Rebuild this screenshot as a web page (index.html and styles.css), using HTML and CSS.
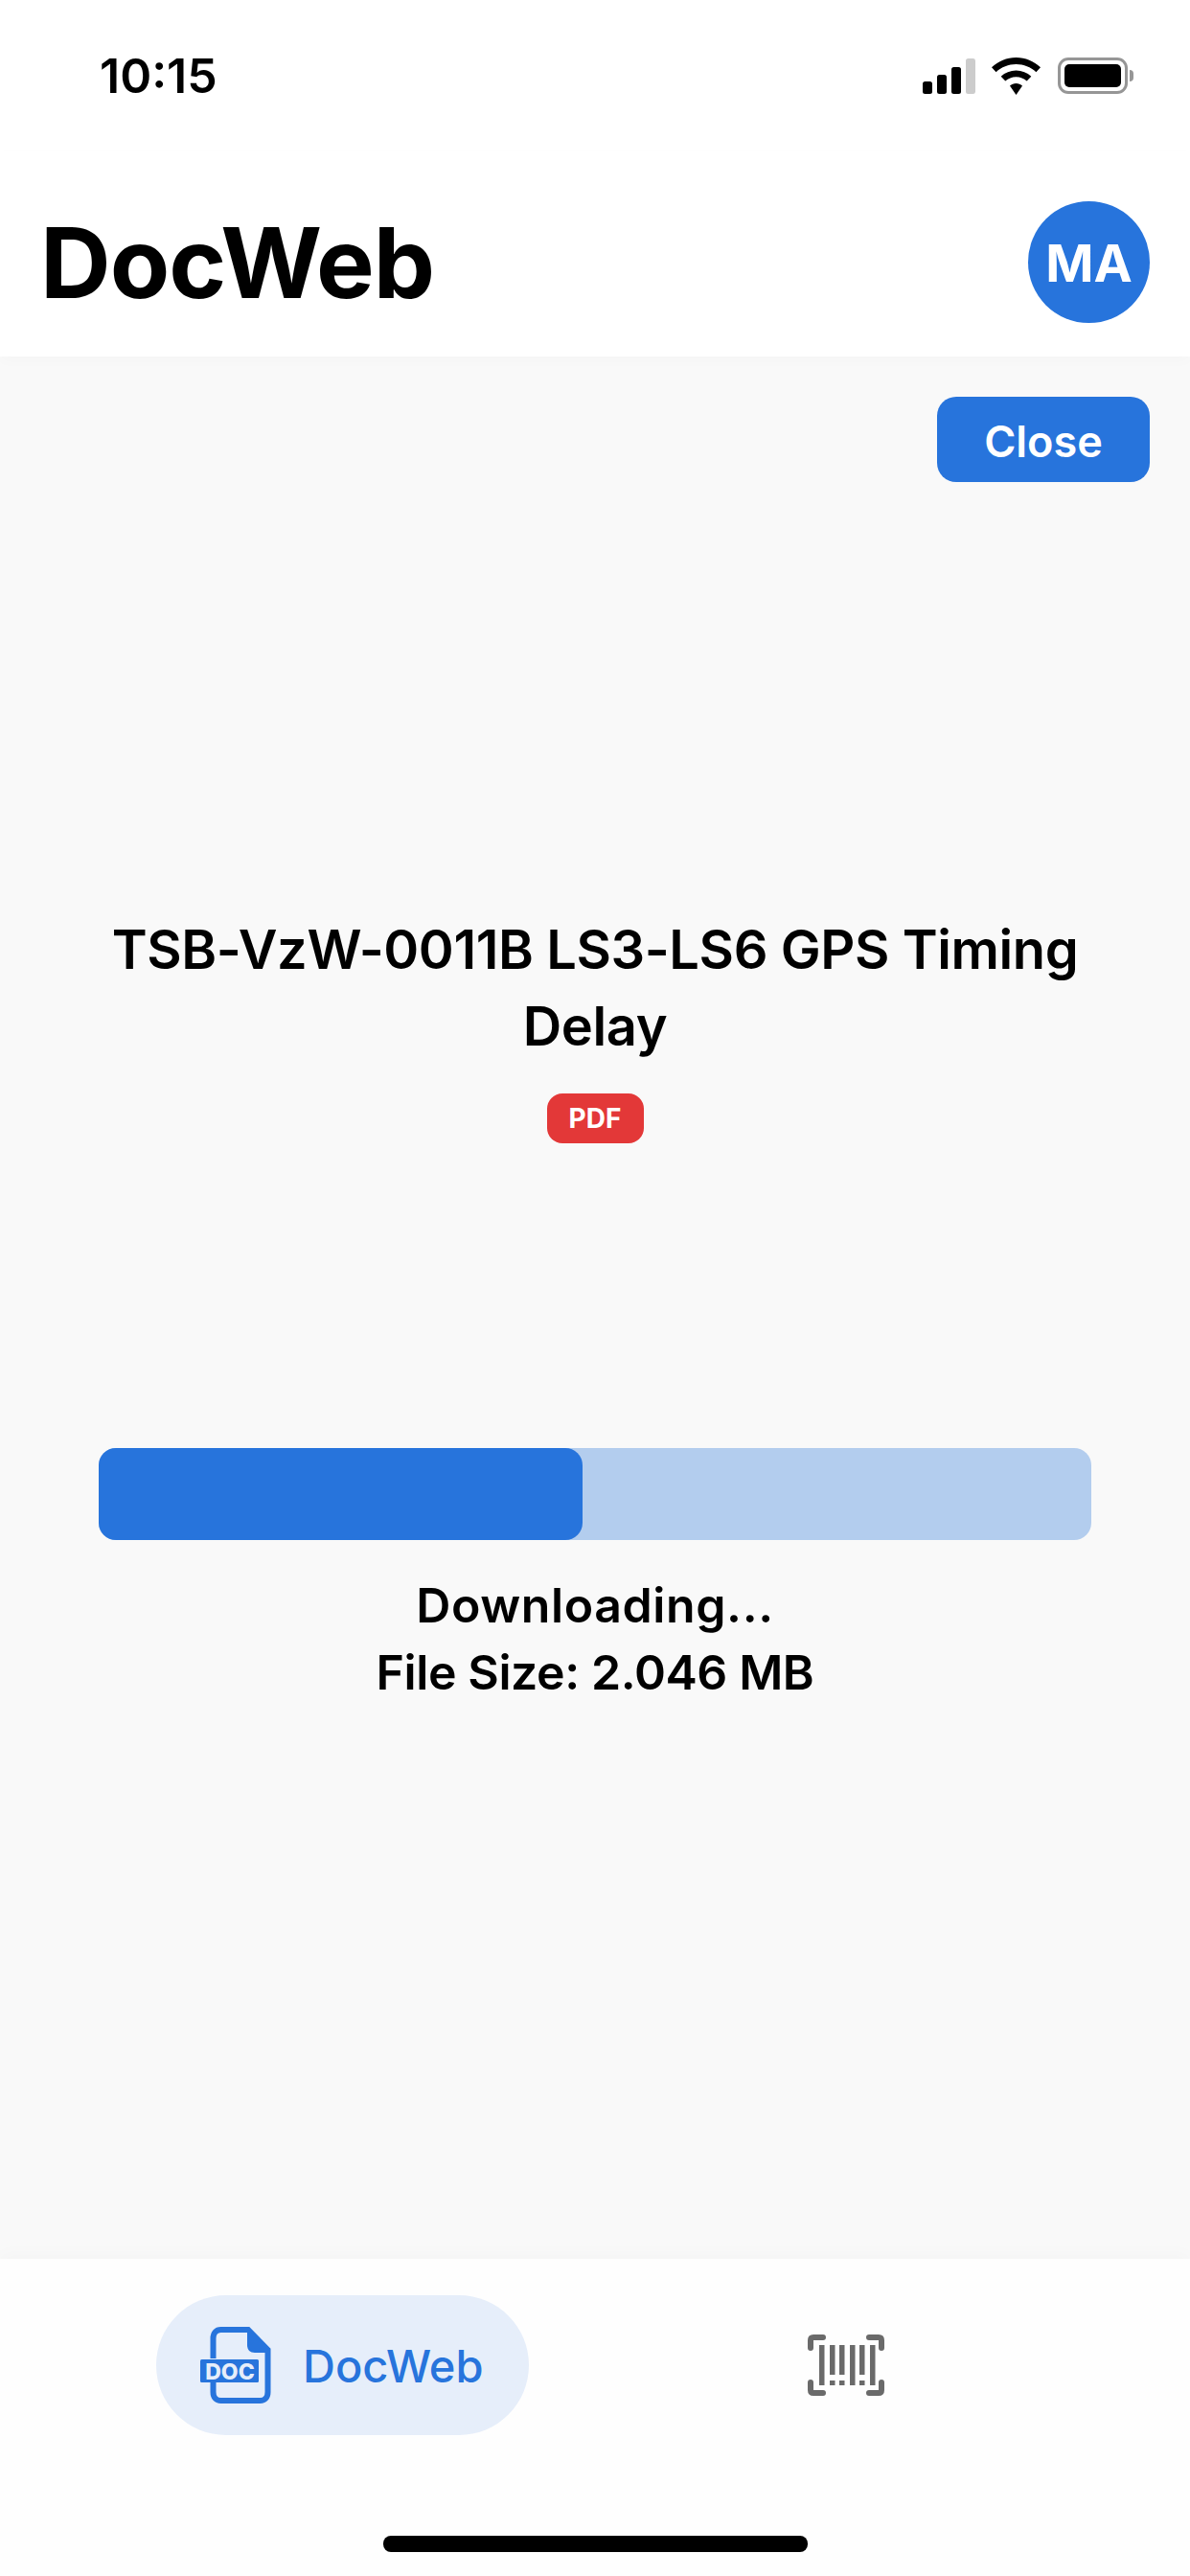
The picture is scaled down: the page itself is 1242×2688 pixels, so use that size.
FILE: index.html
```html
<!DOCTYPE html>
<html lang="en">
<head>
    <meta charset="UTF-8">
    <meta name="viewport" content="width=device-width, initial-scale=1.0">
    <link rel="stylesheet" href="styles.css">
    <title>DocWeb</title>
</head>
<body>
    <!-- status bar -->
    <div class="stat">
        <div class="time">10:15</div>
        <div class="stat-icons">
            <div class="sig">
                <span class="bar b1"></span>
                <span class="bar b2"></span>
                <span class="bar b3"></span>
                <span class="bar b4"></span>
            </div>
            <svg class="wifi" width="51" height="39" viewBox="0 0 51 39">
                <path d="M25.500 0C15.800 0 7 3.800 0 10.300L4.600 15.200C10.200 10 17.500 7 25.500 7S40.800 10 46.400 15.200L51 10.300C44 3.800 35.200 0 25.500 0Z"/>
                <path d="M25.500 13.500C19.500 13.500 14 15.800 9.700 19.700L14.300 24.600C17.300 21.900 21.200 20.300 25.500 20.300S33.700 21.900 36.700 24.600L41.300 19.700C37 15.800 31.500 13.500 25.500 13.500Z"/>
                <path d="M25.500 27C23 27 20.800 27.900 19 29.500L25.500 39L32 29.500C30.200 27.900 28 27 25.500 27Z"/>
            </svg>
            <div class="batt"><div class="batt-in"></div></div>
            <div class="batt-nub"></div>
        </div>
    </div>
    <!-- header -->
    <div class="hed">
        <div class="logo">DocWeb</div>
        <div class="avt">MA</div>
    </div>
    <!-- main part -->
    <div class="main">
        <button class="cls">Close</button>
        <div class="ttl">TSB-VzW-0011B LS3-LS6 GPS Timing<br>Delay</div>
        <div class="pdf">PDF</div>
        <div class="prog">
            <div class="prog-in" style="width: 48.7%"></div>
        </div>
        <div class="inf dl">Downloading...</div>
        <div class="inf">File Size: 2.046 MB</div>
    </div>
    <!-- bottom nav -->
    <div class="nav">
        <div class="tabs">
            <div class="pill">
                <svg class="doc" width="74" height="80" viewBox="0 0 74 80">
                    <path class="doc-line" d="M13.500 33V12C13.500 6.500 16.500 3 21.500 3H50L70.500 24V68C70.500 73.500 67.500 77 62.500 77H21.500C16.500 77 13.500 73.500 13.500 68V58" />
                    <path class="doc-fill" d="M49 2L72 25V27H57C52 27 49 24 49 19Z"/>
                    <rect class="doc-fill" x="0" y="34" width="61" height="24" rx="1.500"/>
                    <text class="doc-txt" x="31" y="54.500" text-anchor="middle">DOC</text>
                </svg>
                <span class="pill-txt">DocWeb</span>
            </div>
            <svg class="code" width="80" height="64" viewBox="0 0 80 64">
                <path class="code-c" d="M3 14V6C3 4 4 3 6 3H16M64 3H74C76 3 77 4 77 6V14M3 50V58C3 60 4 61 6 61H16M64 61H74C76 61 77 60 77 58V50"/>
                <g class="code-b">
                    <rect x="12" y="11" width="5.500" height="42"/>
                    <rect x="23" y="11" width="5.500" height="31"/><rect x="23" y="48" width="5.500" height="5"/>
                    <rect x="33" y="11" width="5.500" height="31"/><rect x="33" y="48" width="5.500" height="5"/>
                    <rect x="44" y="11" width="5.500" height="42"/>
                    <rect x="54" y="11" width="5.500" height="31"/><rect x="54" y="48" width="5.500" height="5"/>
                    <rect x="65" y="11" width="5.500" height="42"/>
                </g>
            </svg>
        </div>
        <div class="home"></div>
    </div>
</body>
</html>
```

FILE: styles.css
```css
*{
    margin: 0;
    padding: 0;
    box-sizing: border-box;
}
body{
    width: 1242px;
    height: 2688px;
    display: flex;
    flex-direction: column;
    font-family: 'Inter', sans-serif;
    background-color: rgb(249, 249, 249);
    color: rgb(0, 0, 0);
    overflow: hidden;
}
/* status bar */
.stat{
    height: 158px;
    background-color: white;
    display: flex;
    justify-content: space-between;
    align-items: center;
    padding: 0 59px 0 104px;
}
.time{
    font-size: 50px;
    font-weight: 600;
}
.stat-icons{
    display: flex;
    align-items: center;
}
.sig{
    display: flex;
    align-items: flex-end;
    gap: 5px;
    height: 37px;
    margin-right: 17px;
}
.bar{
    width: 10px;
    background-color: black;
    border-radius: 2.5px;
}
.b1{height: 13px;}
.b2{height: 20px;}
.b3{height: 28px;}
.b4{height: 37px; background-color: rgb(204, 204, 204);}
.wifi{
    margin-right: 18px;
}
.batt{
    width: 73px;
    height: 38px;
    border: 3px solid rgb(150, 150, 150);
    border-radius: 11px;
    padding: 4px;
}
.batt-in{
    height: 100%;
    background-color: black;
    border-radius: 5px;
}
.batt-nub{
    width: 4px;
    height: 12px;
    margin-left: 2px;
    background-color: rgb(150, 150, 150);
    border-radius: 0 6px 6px 0;
}
/* header */
.hed{
    height: 214px;
    background-color: white;
    display: flex;
    justify-content: space-between;
    align-items: flex-start;
    padding: 52px 42px 0 42px;
    box-shadow: 0 4px 14px rgba(0, 0, 0, 0.02);
    position: relative;
}
.logo{
    font-size: 102px;
    font-weight: 700;
    line-height: 129px;
    letter-spacing: -1px;
}
.avt{
    width: 127px;
    height: 127px;
    border-radius: 50%;
    background-color: rgb(39, 116, 220);
    color: white;
    font-size: 54px;
    font-weight: 700;
    padding-top: 2px;
    display: flex;
    justify-content: center;
    align-items: center;
}
/* main */
.main{
    flex: 1;
    display: flex;
    flex-direction: column;
    align-items: center;
    padding-top: 42px;
}
.cls{
    align-self: flex-end;
    margin-right: 42px;
    width: 222px;
    height: 89px;
    border: none;
    border-radius: 20px;
    background-color: rgb(39, 116, 220);
    color: white;
    font-family: inherit;
    font-size: 45px;
    font-weight: 600;
    padding-top: 3px;
}
.ttl{
    margin-top: 448px;
    font-size: 56px;
    font-weight: 600;
    letter-spacing: -0.4px;
    line-height: 80px;
    text-align: center;
}
.pdf{
    margin-top: 30px;
    width: 101px;
    height: 52px;
    border-radius: 16px;
    background-color: rgb(227, 56, 56);
    color: white;
    font-size: 28px;
    font-weight: 700;
    display: flex;
    justify-content: center;
    align-items: center;
}
.prog{
    margin-top: 318px;
    width: 1036px;
    height: 96px;
    border-radius: 18px;
    background-color: rgb(179, 205, 238);
    margin-bottom: 33px;
}
.prog-in{
    height: 100%;
    border-radius: 18px;
    background-color: rgb(39, 116, 220);
}
.inf{
    font-size: 50px;
    font-weight: 600;
    letter-spacing: -0.4px;
    line-height: 70px;
}
.dl{
    letter-spacing: 0.6px;
}
/* bottom nav */
.nav{
    height: 331px;
    background-color: rgb(254, 254, 254);
    box-shadow: 0 -6px 16px rgba(0, 0, 0, 0.02);
    padding-top: 38px;
    position: relative;
}
.tabs{
    display: flex;
    align-items: center;
    padding-left: 163px;
}
.pill{
    width: 389px;
    height: 146px;
    border-radius: 73px;
    background-color: rgb(230, 238, 250);
    display: flex;
    align-items: center;
    padding-left: 46px;
}
.doc{
    margin-right: 33px;
}
.doc-line{
    fill: none;
    stroke: rgb(39, 116, 220);
    stroke-width: 6;
}
.doc-fill{
    fill: rgb(39, 116, 220);
}
.doc-txt{
    font-size: 23px;
    font-weight: 800;
    fill: rgb(230, 238, 250);
    font-family: 'Inter', sans-serif;
}
.pill-txt{
    font-size: 47px;
    font-weight: 500;
    color: rgb(39, 116, 220);
}
.code{
    margin-left: 291px;
}
.code-c{
    fill: none;
    stroke: rgb(106, 106, 106);
    stroke-width: 6;
    stroke-linecap: round;
}
.code-b{
    fill: rgb(106, 106, 106);
}
.home{
    width: 443px;
    height: 17px;
    margin: 105px auto 0;
    border-radius: 8px;
    background-color: black;
}
```
